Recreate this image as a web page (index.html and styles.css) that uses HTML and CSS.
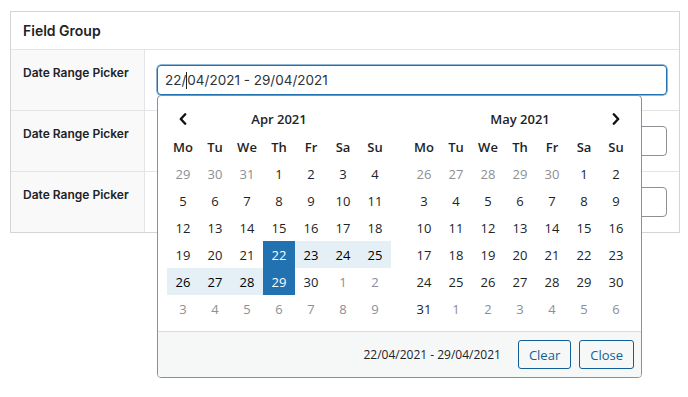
FILE: index.html
```html
<!DOCTYPE html>
<html lang="en">
  <head>
    <meta charset="UTF-8" />
    <meta name="viewport" content="width=device-width, initial-scale=1.0" />
    <title>Date Range Picker</title>
    <link rel="stylesheet" href="styles.css">
  </head>
  <body>
    <div class="field-group">
      <div class="fg-head">Field Group</div>

      <div class="fg-row">
        <div class="fg-label">Date Range Picker</div>
        <div class="fg-input">
          <div class="control is-focused">22/<span class="caret"></span>04/2021 - 29/04/2021</div>

          <div class="drp">
            <div class="drp-cals">
              <div class="cal">
                <div class="cal-title">
                  <span class="nav">
                    <svg width="8" height="12" viewBox="0 0 8 12"><path d="M6.2 1.3 L1.8 6 L6.2 10.7" fill="none" stroke="#111" stroke-width="2.4" stroke-linecap="round" stroke-linejoin="round"/></svg>
                  </span>
                  <span class="month">Apr 2021</span>
                </div>
                <div class="cal-grid">
                  <span class="dow">Mo</span><span class="dow">Tu</span><span class="dow">We</span><span class="dow">Th</span><span class="dow">Fr</span><span class="dow">Sa</span><span class="dow">Su</span>
                  <span class="off">29</span><span class="off">30</span><span class="off">31</span><span>1</span><span>2</span><span>3</span><span>4</span>
                  <span>5</span><span>6</span><span>7</span><span>8</span><span>9</span><span>10</span><span>11</span>
                  <span>12</span><span>13</span><span>14</span><span>15</span><span>16</span><span>17</span><span>18</span>
                  <span>19</span><span>20</span><span>21</span><span class="active">22</span><span class="in-range">23</span><span class="in-range">24</span><span class="in-range">25</span>
                  <span class="in-range">26</span><span class="in-range">27</span><span class="in-range">28</span><span class="active">29</span><span>30</span><span class="off">1</span><span class="off">2</span>
                  <span class="off">3</span><span class="off">4</span><span class="off">5</span><span class="off">6</span><span class="off">7</span><span class="off">8</span><span class="off">9</span>
                </div>
              </div>

              <div class="cal">
                <div class="cal-title">
                  <span class="month">May 2021</span>
                  <span class="nav">
                    <svg width="8" height="12" viewBox="0 0 8 12"><path d="M1.8 1.3 L6.2 6 L1.8 10.7" fill="none" stroke="#111" stroke-width="2.4" stroke-linecap="round" stroke-linejoin="round"/></svg>
                  </span>
                </div>
                <div class="cal-grid">
                  <span class="dow">Mo</span><span class="dow">Tu</span><span class="dow">We</span><span class="dow">Th</span><span class="dow">Fr</span><span class="dow">Sa</span><span class="dow">Su</span>
                  <span class="off">26</span><span class="off">27</span><span class="off">28</span><span class="off">29</span><span class="off">30</span><span>1</span><span>2</span>
                  <span>3</span><span>4</span><span>5</span><span>6</span><span>7</span><span>8</span><span>9</span>
                  <span>10</span><span>11</span><span>12</span><span>13</span><span>14</span><span>15</span><span>16</span>
                  <span>17</span><span>18</span><span>19</span><span>20</span><span>21</span><span>22</span><span>23</span>
                  <span>24</span><span>25</span><span>26</span><span>27</span><span>28</span><span>29</span><span>30</span>
                  <span>31</span><span class="off">1</span><span class="off">2</span><span class="off">3</span><span class="off">4</span><span class="off">5</span><span class="off">6</span>
                </div>
              </div>
            </div>

            <div class="drp-foot">
              <span class="drp-range">22/04/2021 - 29/04/2021</span>
              <button class="btn" type="button">Clear</button>
              <button class="btn" type="button">Close</button>
            </div>
          </div>
        </div>
      </div>

      <div class="fg-row">
        <div class="fg-label">Date Range Picker</div>
        <div class="fg-input">
          <div class="control"></div>
        </div>
      </div>

      <div class="fg-row">
        <div class="fg-label">Date Range Picker</div>
        <div class="fg-input">
          <div class="control"></div>
        </div>
      </div>
    </div>
  </body>
</html>
```

FILE: styles.css
```css
html,
body {
  margin: 0;
  padding: 0;
  background: #fff;
}

body {
  min-height: 100vh;
  font-family: Inter, "Liberation Sans", sans-serif;
  color: #1d2327;
}

.field-group {
  width: 670px;
  margin: 11px 0 0 10px;
  box-sizing: border-box;
  border: 1px solid #d4d5d7;
}

.fg-head {
  height: 37px;
  padding: 0 12px;
  display: flex;
  align-items: center;
  font-size: 14px;
  font-weight: 600;
}

.fg-row {
  display: grid;
  grid-template-columns: 134px 1fr;
  border-top: 1px solid #e2e4e7;
}

.fg-label {
  box-sizing: border-box;
  padding: 15px 0 15px 12px;
  background: #f9f9f9;
  border-right: 1px solid #e2e4e7;
  font-size: 12px;
  font-weight: 600;
  line-height: 16px;
  white-space: nowrap;
}

.fg-input {
  position: relative;
  padding: 15px 12px;
}

.control {
  box-sizing: border-box;
  height: 30px;
  padding: 0 7px;
  border: 1px solid #8c8f94;
  border-radius: 4px;
  display: flex;
  align-items: center;
  font-size: 13.5px;
  color: #2c3338;
}

.control.is-focused {
  border-color: #2271b1;
  box-shadow: 0 0 0 0.5px #2271b1;
}

.caret {
  display: inline-block;
  width: 1px;
  height: 17px;
  background: #1d2327;
}

/* date range picker dropdown */
.drp {
  position: absolute;
  top: 45px;
  left: 12px;
  z-index: 2;
  width: 485px;
  box-sizing: border-box;
  background: #fff;
  border: 1px solid #8c8f94;
  border-radius: 4px;
  overflow: hidden;
  font-family: "Open Sans", sans-serif;
  font-size: 13px;
  color: #1d2327;
}

.drp-cals {
  display: flex;
  gap: 17px;
  padding: 9px 9px 9px;
}

.cal-title {
  display: grid;
  grid-template-columns: repeat(7, 32px);
  height: 28px;
  align-items: center;
  font-weight: 600;
}

.cal-title .nav {
  display: flex;
  justify-content: center;
}

.cal-title .month {
  grid-column: 2 / 7;
  text-align: center;
}

.cal-grid {
  display: grid;
  grid-template-columns: repeat(7, 32px);
  grid-auto-rows: 27px;
}

.cal-grid span {
  display: flex;
  align-items: center;
  justify-content: center;
}

.cal-grid .dow {
  font-weight: 600;
}

.cal-grid .off {
  color: #8c8f94;
}

.cal-grid .in-range {
  background: #e5f0f6;
  color: #000;
}

.cal-grid .active {
  background: #2271b1;
  color: #fff;
}

.drp-foot {
  display: flex;
  justify-content: flex-end;
  align-items: center;
  gap: 8px;
  padding: 8px 7px;
  background: #f6f7f7;
  border-top: 1px solid #dcdcde;
}

.drp-range {
  margin-right: 9px;
  font-size: 12px;
}

.btn {
  box-sizing: border-box;
  height: 29px;
  padding: 0 10px;
  border: 1px solid #135e96;
  border-radius: 3px;
  background: #f6f7f7;
  color: #135e96;
  font-family: "Open Sans", sans-serif;
  font-size: 13px;
}
```
